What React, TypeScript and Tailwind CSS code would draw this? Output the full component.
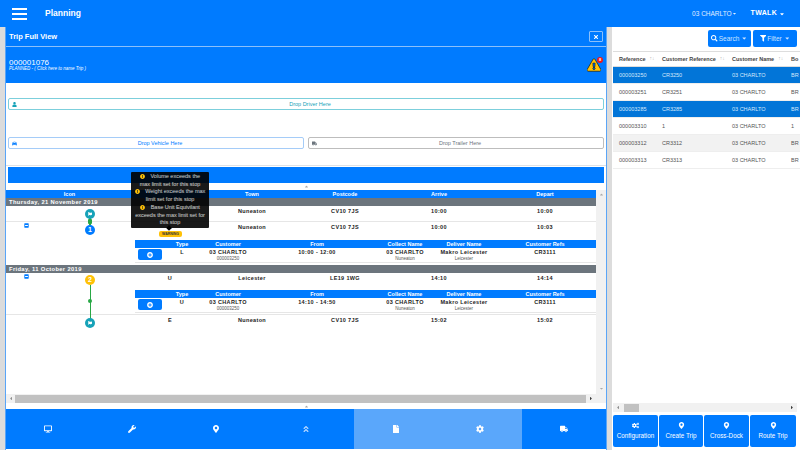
import { ReactNode } from 'react';
import {
    FaCar, FaCog, FaCogs, FaDesktop, FaExclamationTriangle, FaFile, FaFilter, FaFlag, FaAngleDoubleUp,
    FaMapMarkerAlt, FaPlusCircle, FaSearch, FaTimes, FaTruck, FaUser, FaWrench, FaCaretDown, FaMinusSquare,
    FaCaretLeft, FaCaretRight, FaCaretUp, FaExclamationCircle,
} from 'react-icons/fa';

const mainCols = 'grid grid-cols-[137px_54px_110px_76px_112px_100px] text-center';
const subCols = 'grid grid-cols-[30px_34px_58px_120px_56px_62px_100px] text-center';

const listRows = [
    { ref: '000003250', cust: 'CR3250', sel: true, bo: 'BR' },
    { ref: '000003251', cust: 'CR3251', bo: 'BR' },
    { ref: '000003285', cust: 'CR3285', sel: true, bo: 'BR' },
    { ref: '000003310', cust: '1', bo: '1' },
    { ref: '000003312', cust: 'CR3312', grey: true, bo: 'BR' },
    { ref: '000003313', cust: 'CR3313', bo: 'BR' },
];

function DropBox({ icon, label, color, text }: { icon: ReactNode; label: string; color: string; text: string }) {
    return (
        <div className={`flex-1 h-[12px] flex items-center relative rounded-[2px] border bg-white pl-[8px] ${color} ${text}`}>
            <span className="absolute left-[3px] text-[5px]">{icon}</span>
            <span className="w-full text-center text-[5.5px]">{label}</span>
        </div>
    );
}

function SubTable({ type, from }: { type: string; from: string }) {
    return (
        <div className="ml-[129px] w-[461px]">
            <div className={`${subCols} h-[8px] bg-[#007bff] text-white text-[5.5px] font-bold leading-[8px]`}>
                <div />
                <div>Type</div>
                <div>Customer</div>
                <div>From</div>
                <div>Collect Name</div>
                <div>Deliver Name</div>
                <div>Customer Refs</div>
            </div>
            <div className={`${subCols} h-[15px] border-b border-[#e6e6e6] text-[5.5px] leading-[7px] font-bold text-[#222] tracking-[0.35px]`}>
                <div className="pl-[3px] pt-[1px]">
                    <div className="w-[24px] h-[11px] rounded-[2px] bg-[#007bff] text-white flex items-center justify-center text-[6px]">
                        <FaPlusCircle />
                    </div>
                </div>
                <div className="pt-[1px]">{type}</div>
                <div className="pt-[1px]">
                    03 CHARLTO
                    <div className="text-[4.5px] leading-[6px] font-normal text-[#555] tracking-normal">000003250</div>
                </div>
                <div className="pt-[1px]">{from}</div>
                <div className="pt-[1px]">
                    03 CHARLTO
                    <div className="text-[4.5px] leading-[6px] font-normal text-[#555] tracking-normal">Nuneaton</div>
                </div>
                <div className="pt-[1px]">
                    Makro Leicester
                    <div className="text-[4.5px] leading-[6px] font-normal text-[#555] tracking-normal">Leicester</div>
                </div>
                <div className="pt-[1px]">CR3111</div>
            </div>
        </div>
    );
}

function DateRow({ label }: { label: string }) {
    return (
        <div className="h-[8px] bg-[#6c757d] text-white text-[5.8px] font-bold leading-[8px] pl-[3px] tracking-[0.35px]">{label}</div>
    );
}

function MainRow({ type, town, post, arrive, depart }: { type: string; town: string; post: string; arrive: string; depart: string }) {
    return (
        <div className={`${mainCols} text-[5.5px] font-bold text-[#222] pt-[2px] leading-[7px] tracking-[0.35px]`}>
            <div />
            <div>{type}</div>
            <div>{town}</div>
            <div>{post}</div>
            <div>{arrive}</div>
            <div>{depart}</div>
        </div>
    );
}

function StopIcon({ top, bg, children }: { top: number; bg: string; children: ReactNode }) {
    return (
        <div
            className={`absolute left-[79px] w-[10px] h-[10px] rounded-full text-white flex items-center justify-center text-[7px] font-bold ${bg}`}
            style={{ top }}
        >
            {children}
        </div>
    );
}

function SortHead({ label, width }: { label: string; width: string }) {
    return (
        <div className={`${width} shrink-0 flex items-center`}>
            <span>{label}</span>
            <span className="ml-[4px] text-[5px] font-normal text-[#bbb]">↑↓</span>
        </div>
    );
}

export default function App() {
    return (
        <div className="w-[800px] h-[450px] overflow-hidden flex flex-col bg-white font-['Liberation_Sans',Arial,sans-serif]">
            {/* Top bar */}
            <header className="h-[27px] shrink-0 bg-[#007bff] text-white flex items-center relative">
                <div className="ml-[12px] w-[15px] flex flex-col gap-[3px]">
                    <div className="h-[2px] bg-white" />
                    <div className="h-[2px] bg-white" />
                    <div className="h-[2px] bg-white" />
                </div>
                <div className="ml-[18px] text-[8.5px] font-bold">Planning</div>
                <div className="ml-auto flex items-center text-[6.5px] text-[#e0eeff] mr-[15px]">
                    <span>03 CHARLTO</span>
                    <FaCaretDown className="text-[5px]" />
                    <span className="ml-[14px] font-bold text-white text-[7px] tracking-[0.3px]">TWALK</span>
                    <FaCaretDown className="text-[6px] ml-[2px] text-white" />
                </div>
            </header>

            <div className="flex-1 flex min-h-0">
                {/* Trip panel */}
                <div className="w-[612px] shrink-0 bg-[#dcdcdc] pl-[5px] pr-[5px] flex">
                    <div className="w-[602px] border-x border-[#5aa5f7] flex flex-col bg-white">
                        <div className="h-[20px] bg-[#007bff] text-white flex items-center justify-between pl-[3px] pr-[3px] border-b border-[#8cc0fa] shrink-0">
                            <span className="text-[7.5px] font-bold">Trip Full View</span>
                            <span className="w-[14px] h-[11px] border border-[#8cc0fa] rounded-[1px] flex items-center justify-center text-[6px]">
                                <FaTimes />
                            </span>
                        </div>
                        <div className="h-[36px] bg-[#007bff] text-white flex items-center justify-between pl-[3px] pr-[4px] shrink-0">
                            <div className="leading-none">
                                <div className="text-[8px] leading-[7px]">000001076</div>
                                <div className="text-[4.5px] italic leading-[5px]">PLANNED - ( Click here to name Trip )</div>
                            </div>
                            <div className="relative w-[15px] h-[14px]">
                                <FaExclamationTriangle className="text-[14px] text-[#ffc107] stroke-black [stroke-width:25px]" />
                                <span className="absolute -top-[1px] -right-[1px] w-[6px] h-[6px] rounded-full bg-[#f01818] text-white text-[4px] font-bold flex items-center justify-center">8</span>
                            </div>
                        </div>

                        <div className="px-[2px] pt-[15px] flex shrink-0">
                            <DropBox icon={<FaUser />} label="Drop Driver Here" color="border-[#7ccfdc]" text="text-[#17a2b8]" />
                        </div>
                        <div className="px-[2px] pt-[27px] flex gap-[4px] shrink-0">
                            <DropBox icon={<FaCar />} label="Drop Vehicle Here" color="border-[#a5ccf8]" text="text-[#007bff]" />
                            <DropBox icon={<FaTruck />} label="Drop Trailer Here" color="border-[#bdbdbd]" text="text-[#6c757d]" />
                        </div>
                        <div className="mt-[16px] border-t border-[#dee2e6] shrink-0" />
                        <div className="mx-[2px] mt-[1px] h-[16px] bg-[#007bff] shrink-0" />
                        <div className="h-[7px] flex items-center justify-center text-[5px] text-[#aaa] shrink-0">
                            <FaCaretUp />
                        </div>

                        {/* Stops table */}
                        <div className="h-[213px] shrink-0 flex">
                            <div className="w-[590px] flex flex-col relative">
                                <div className={`${mainCols} h-[8px] bg-[#007bff] text-white text-[5.5px] font-bold leading-[8px]`}>
                                    <div className="pr-[10px]">Icon</div>
                                    <div />
                                    <div>Town</div>
                                    <div>Postcode</div>
                                    <div>Arrive</div>
                                    <div>Depart</div>
                                </div>
                                <DateRow label="Thursday, 21 November 2019" />
                                <div className="h-[16px] border-b border-[#e6e6e6]">
                                    <MainRow type="" town="Nuneaton" post="CV10 7JS" arrive="10:00" depart="10:00" />
                                </div>
                                <div className="h-[43px]">
                                    <MainRow type="L" town="Nuneaton" post="CV10 7JS" arrive="10:00" depart="10:03" />
                                    <div className="mt-[9px]">
                                        <SubTable type="L" from="10:00  -  12:00" />
                                    </div>
                                </div>
                                <DateRow label="Friday, 11 October 2019" />
                                <div className="h-[42px] border-b border-[#e6e6e6]">
                                    <MainRow type="U" town="Leicester" post="LE19 1WG" arrive="14:10" depart="14:14" />
                                    <div className="mt-[8px]">
                                        <SubTable type="U" from="14:10  -  14:50" />
                                    </div>
                                </div>
                                <MainRow type="E" town="Nuneaton" post="CV10 7JS" arrive="15:02" depart="15:02" />

                                {/* timeline */}
                                <div className="absolute left-[83px] top-[28px] w-[2px] h-[8px] bg-[#28a745]" />
                                <div className="absolute left-[82px] top-[29px] w-[4px] h-[5px] bg-[#28a745] rounded-[1px]" />
                                <div className="absolute left-[83.5px] top-[95px] w-[1.5px] h-[36px] bg-[#28a745]" />
                                <div className="absolute left-[82px] top-[109px] w-[4px] h-[4px] bg-[#28a745] rounded-full" />
                                <StopIcon top={19} bg="bg-[#17a2b8]"><FaFlag className="text-[4px]" /></StopIcon>
                                <StopIcon top={35} bg="bg-[#007bff]">1</StopIcon>
                                <StopIcon top={85} bg="bg-[#ffc107]">2</StopIcon>
                                <StopIcon top={128} bg="bg-[#17a2b8]"><FaFlag className="text-[4px]" /></StopIcon>
                                <FaMinusSquare className="absolute left-[18px] top-[33px] text-[5px] text-[#007bff]" />
                                <FaMinusSquare className="absolute left-[18px] top-[84px] text-[5px] text-[#007bff]" />

                                {/* warning tooltip */}
                                <div className="absolute left-[125px] -top-[18px] w-[78px] h-[56px] rounded-[1px] bg-black/90 text-white/80 text-[5.5px] leading-[7.7px] text-center pt-[1px] whitespace-nowrap">
                                    <div><FaExclamationCircle className="inline text-[#ffc107] text-[5px] mr-[4px]" /> Volume exceeds the<br />max limit set for this stop</div>
                                    <div><FaExclamationCircle className="inline text-[#ffc107] text-[5px] mr-[4px]" /> Weight exceeds the max<br />limit set for this stop</div>
                                    <div><FaExclamationCircle className="inline text-[#ffc107] text-[5px] mr-[4px]" /> Base Unit Equivilant<br />exceeds the max limit set for<br />this stop</div>
                                    <div className="absolute left-[36px] -bottom-[2px] w-[4px] h-[4px] rotate-45 bg-black" />
                                </div>
                                <div className="absolute left-[153px] top-[41px] w-[23px] h-[6px] rounded-[2px] bg-[#ffc107] text-[#333] text-[3.5px] font-bold leading-[6px] text-center">WARNING</div>

                                {/* horizontal scrollbar */}
                                <div className="mt-auto h-[9px] bg-[#f1f1f1] flex items-center">
                                    <FaCaretLeft className="ml-[2px] w-[6px] text-[5px] text-[#888]" />
                                    <div className="ml-[1px] flex-1 h-[8px] bg-[#c1c1c1]" />
                                    <FaCaretRight className="mx-[2px] w-[6px] text-[5px] text-[#333]" />
                                </div>
                            </div>
                            <div className="w-[10px] bg-[#f1f1f1] flex flex-col items-center justify-between text-[5px] text-[#aaa] pt-[2px] pb-[12px]">
                                <FaCaretUp />
                                <FaCaretDown />
                            </div>
                        </div>

                        <div className="h-[6px] flex items-center justify-center text-[5px] text-[#aaa] shrink-0">
                            <FaCaretUp />
                        </div>

                        {/* Bottom tabs */}
                        <nav className="flex-1 bg-[#007bff] grid grid-cols-[84px_84px_84px_96px_84px_84px_84px] text-white text-[8px] mb-[1px]">
                            <div className="flex items-center justify-center"><FaDesktop /></div>
                            <div className="flex items-center justify-center"><FaWrench /></div>
                            <div className="flex items-center justify-center"><FaMapMarkerAlt /></div>
                            <div className="flex items-center justify-center text-[#b5d7ff]"><FaAngleDoubleUp /></div>
                            <div className="flex items-center justify-center bg-[#5aa7fb]"><FaFile /></div>
                            <div className="flex items-center justify-center bg-[#5aa7fb]"><FaCog /></div>
                            <div className="flex items-center justify-center"><FaTruck /></div>
                        </nav>
                    </div>
                </div>

                {/* Right list panel */}
                <aside className="flex-1 flex flex-col min-w-0 bg-white pl-[1px] pb-[3px]">
                    <div className="h-[24px] flex justify-end items-start pt-[3px] pr-[3px] gap-[2px] shrink-0">
                        <button className="w-[43px] h-[17px] rounded-[2px] bg-[#007bff] text-[#cfe4ff] text-[6.5px] flex items-center justify-center gap-[1px]">
                            <FaSearch className="text-white" /> Search <FaCaretDown className="ml-[1px]" />
                        </button>
                        <button className="w-[44px] h-[17px] rounded-[2px] bg-[#007bff] text-[#cfe4ff] text-[6.5px] flex items-center justify-center gap-[1px]">
                            <FaFilter className="text-white" /> Filter <FaCaretDown className="ml-[1px]" />
                        </button>
                    </div>
                    <div className="overflow-hidden flex-1 min-h-0 text-[5.5px]">
                        <div className="h-[16px] flex items-center font-bold text-[#444] border-b border-[#ddd] border-t">
                            <div className="w-[6px] shrink-0" />
                            <SortHead label="Reference" width="w-[43px]" />
                            <SortHead label="Customer Reference" width="w-[70px]" />
                            <SortHead label="Customer Name" width="w-[59px]" />
                            <div className="shrink-0">Bo</div>
                        </div>
                        {listRows.map((r) => (
                            <div
                                key={r.ref}
                                className={`h-[17px] flex items-center border-b border-[#eee] ${r.sel ? 'bg-[#0275d8] text-[#d5e8fb]' : r.grey ? 'bg-[#f2f2f2] text-[#555]' : 'text-[#555]'}`}
                            >
                                <div className="w-[49px] pl-[6px] shrink-0">{r.ref}</div>
                                <div className="w-[70px] shrink-0">{r.cust}</div>
                                <div className="w-[59px] shrink-0">03 CHARLTO</div>
                                <div className="shrink-0">{r.bo}</div>
                            </div>
                        ))}
                    </div>
                    <div className="h-[9px] bg-[#f1f1f1] mr-[3px] flex items-center shrink-0">
                        <FaCaretLeft className="ml-[2px] w-[6px] text-[5px] text-[#888]" />
                        <div className="ml-[3px] w-[15px] h-[8px] bg-[#c1c1c1]" />
                        <FaCaretRight className="ml-auto mr-[2px] w-[6px] text-[5px] text-[#333]" />
                    </div>
                    <div className="h-[32px] mt-[3px] pr-[3px] flex gap-[1px] shrink-0 text-white text-[6.3px]">
                        <button className="w-[45px] rounded-[2px] bg-[#007bff] flex flex-col items-center justify-center gap-[2px]"><FaCogs className="text-[7px]" />Configuration</button>
                        <button className="w-[44px] rounded-[2px] bg-[#007bff] flex flex-col items-center justify-center gap-[2px]"><FaMapMarkerAlt className="text-[7px]" />Create Trip</button>
                        <button className="w-[45px] rounded-[2px] bg-[#007bff] flex flex-col items-center justify-center gap-[2px]"><FaMapMarkerAlt className="text-[7px]" />Cross-Dock</button>
                        <button className="w-[46px] rounded-[2px] bg-[#007bff] flex flex-col items-center justify-center gap-[2px]"><FaMapMarkerAlt className="text-[7px]" />Route Trip</button>
                    </div>
                </aside>
            </div>
        </div>
    );
}
